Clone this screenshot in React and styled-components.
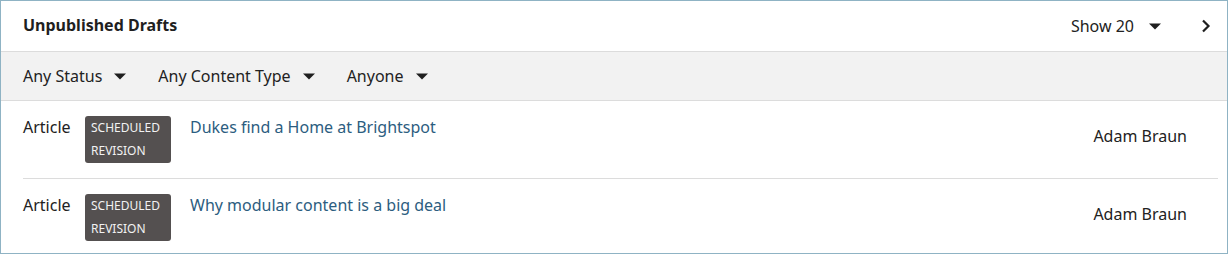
import React from "react";
import styled, { createGlobalStyle } from "styled-components";

const GlobalStyle = createGlobalStyle`
  html, body {
    margin: 0;
    padding: 0;
    background: #fff;
  }
  body {
    font-family: "Noto Sans", "Open Sans", sans-serif;
    color: #222;
  }
`;

const Panel = styled.div`
  box-sizing: border-box;
  width: 1228px;
  height: 254px;
  border: 1px solid #8fb3c4;
  overflow: hidden;
  background: #fff;
`;

const Header = styled.div`
  display: flex;
  align-items: center;
  height: 50px;
  padding: 0 16px 0 22px;
  border-bottom: 1px solid #dcdcdc;
`;

const Title = styled.h2`
  flex: 1;
  margin: 0 0 2px;
  font-size: 16px;
  font-weight: 700;
  color: #1f1f1f;
`;

const ShowSelect = styled.div`
  display: flex;
  align-items: center;
  gap: 15px;
  font-size: 16px;
  color: #222;
`;

const NextButton = styled.button`
  display: flex;
  align-items: center;
  margin-left: 40px;
  padding: 0;
  border: 0;
  background: none;
  cursor: pointer;
`;

const Filters = styled.div`
  display: flex;
  align-items: center;
  gap: 32px;
  height: 48px;
  padding: 0 22px;
  background: #f2f2f2;
  border-bottom: 1px solid #dcdcdc;
`;

const Filter = styled.div`
  display: flex;
  align-items: center;
  gap: 12px;
  font-size: 16px;
  color: #222;
`;

const Row = styled.div`
  display: flex;
  align-items: flex-start;
  margin: 0 9px 0 22px;
  padding: 15px 31px 15px 0;
  border-top: ${(p) => (p.$first ? "none" : "1px solid #dcdcdc")};
  line-height: 23px;
  font-size: 16px;
`;

const Type = styled.span`
  width: 62px;
  color: #222;
`;

const Badge = styled.span`
  width: 74px;
  padding: 0 6px 1px;
  border-radius: 3px;
  background: #545050;
  color: #f2f2f2;
  font-size: 12px;
  text-transform: uppercase;
`;

const Headline = styled.a`
  flex: 1;
  margin-left: 19px;
  color: #2c5d80;
  text-decoration: none;
`;

const Author = styled.span`
  margin-top: 9px;
  color: #222;
`;

const Caret = () => (
  <svg width="12" height="7" viewBox="0 0 12 7">
    <path d="M0 0.5h12L6 6.5z" fill="#1f1f1f" />
  </svg>
);

const Chevron = () => (
  <svg width="10" height="14" viewBox="0 0 10 14">
    <path d="M2 1.5l5.5 5.5L2 12.5" fill="none" stroke="#1f1f1f" strokeWidth="2.2" />
  </svg>
);

const drafts = [
  { type: "Article", title: "Dukes find a Home at Brightspot", author: "Adam Braun" },
  { type: "Article", title: "Why modular content is a big deal", author: "Adam Braun" },
];

export default function App() {
  return (
    <>
      <GlobalStyle />
      <Panel>
        <Header>
          <Title>Unpublished Drafts</Title>
          <ShowSelect>
            Show 20 <Caret />
          </ShowSelect>
          <NextButton aria-label="Next">
            <Chevron />
          </NextButton>
        </Header>
        <Filters>
          <Filter>Any Status <Caret /></Filter>
          <Filter>Any Content Type <Caret /></Filter>
          <Filter>Anyone <Caret /></Filter>
        </Filters>
        {drafts.map((d, i) => (
          <Row key={d.title} $first={i === 0}>
            <Type>{d.type}</Type>
            <Badge>Scheduled Revision</Badge>
            <Headline href="#">{d.title}</Headline>
            <Author>{d.author}</Author>
          </Row>
        ))}
      </Panel>
    </>
  );
}
